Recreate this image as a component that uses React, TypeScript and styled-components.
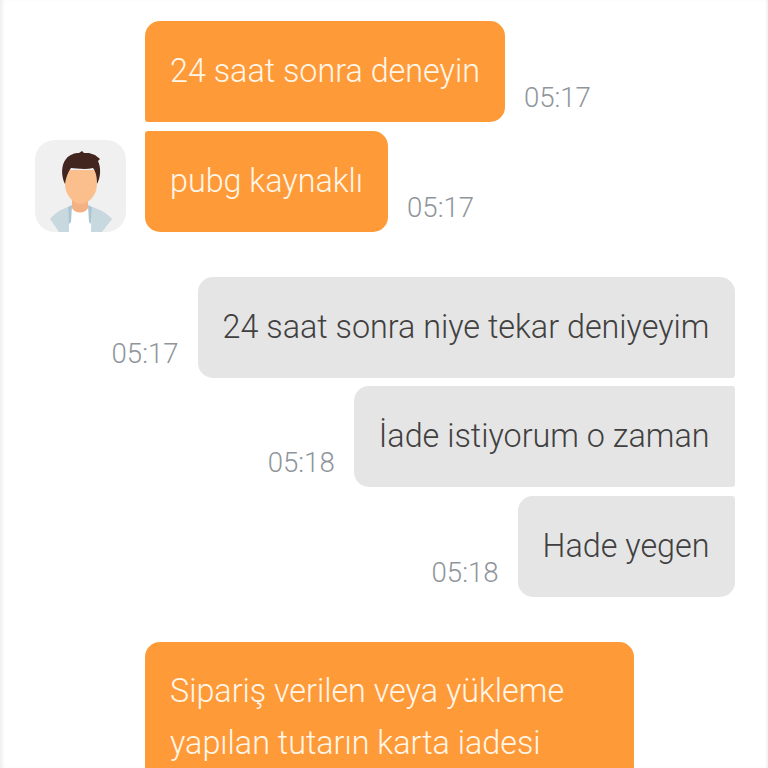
import React from 'react'
import styled, { createGlobalStyle } from 'styled-components'

const GlobalStyle = createGlobalStyle`
  html, body {
    margin: 0;
    padding: 0;
    background: #ffffff;
    height: 768px;
    overflow: hidden;
  }
`

const Avatar = () => (
  <AvatarBox>
    <svg width="91" height="92" viewBox="0 0 91 92">
      {/* jacket */}
      <path d="M15 79 C20 73 27 69 33 67 L35 92 L24 92 Z" fill="#c8d8df" />
      <path d="M77 79 C72 73 64 69 57 67 L56 92 L67 92 Z" fill="#c8d8df" />
      {/* shirt */}
      <path d="M34 69 L56 69 L56 92 L34 92 Z" fill="#ffffff" />
      {/* lapels */}
      <path d="M33 67 L37 65 L36 82 L34 84 Z" fill="#a9c4d2" />
      <path d="M57 67 L53 65 L54 82 L56 84 Z" fill="#a9c4d2" />
      {/* neck */}
      <path d="M37 54 L53 54 L53 68 C50 74 40 74 37 68 Z" fill="#f4b183" />
      {/* face */}
      <path d="M30 30 L62 30 L62 44 C62 56 53 64 46 64 C39 64 30 56 30 44 Z" fill="#fbbf8e" />
      {/* hair */}
      <path d="M30 44 C26 36 26 25 31 19 C35 14 40 13 44 13 L47 11 L49 13 L54 13 L60 15 L65 19 L63 21 C66 27 66 37 62 44 C62 37 61 32 58 28 C50 30 40 28 36 28 C33 32 31 37 30 44 Z" fill="#41251e" />
    </svg>
  </AvatarBox>
)

export default function App() {
  return (
    <Screen>
      <GlobalStyle />
      <Incoming>
        <Avatar />
        <Stack>
          <Row>
            <Bubble $orange $bl={3}>24 saat sonra deneyin</Bubble>
            <Time>05:17</Time>
          </Row>
          <Row>
            <Bubble $orange $tl={3}>pubg kaynaklı</Bubble>
            <Time>05:17</Time>
          </Row>
        </Stack>
      </Incoming>

      <Outgoing>
        <Row>
          <Time>05:17</Time>
          <Bubble $br={3}>24 saat sonra niye tekar deniyeyim</Bubble>
        </Row>
        <Row>
          <Time>05:18</Time>
          <Bubble $tr={3} $br={3}>İade istiyorum o zaman</Bubble>
        </Row>
        <Row>
          <Time>05:18</Time>
          <Bubble $tr={3}>Hade yegen</Bubble>
        </Row>
      </Outgoing>

      <LastBubble>
        Sipariş verilen veya yükleme
        <br />
        yapılan tutarın karta iadesi
      </LastBubble>
    </Screen>
  )
}

const Screen = styled.div`
  box-sizing: border-box;
  width: 768px;
  height: 768px;
  overflow: hidden;
  padding: 21px 33.5px 0 35px;
  background: #ffffff;
  box-shadow: inset 4px 0 4px -2px #ececec, inset -3px 0 3px -2px #ececec;
  font-family: Roboto, "Liberation Sans", sans-serif;
`

const Incoming = styled.section`
  display: flex;
  align-items: flex-end;
  gap: 19px;
`

const AvatarBox = styled.div`
  width: 91px;
  height: 92px;
  flex: none;
  border-radius: 20px;
  overflow: hidden;
  background: #f0f0f0;

  svg {
    display: block;
  }
`

const Stack = styled.div`
  display: flex;
  flex-direction: column;
  gap: 8.5px;
`

const Row = styled.div`
  display: flex;
  align-items: flex-end;
  gap: 19px;
`

const Outgoing = styled.section`
  display: flex;
  flex-direction: column;
  align-items: flex-end;
  gap: 8.5px;
  margin-top: 45px;
`

const Bubble = styled.div<{ $orange?: boolean; $tl?: number; $tr?: number; $br?: number; $bl?: number }>`
  box-sizing: border-box;
  height: 101px;
  padding: 30px 25px;
  border-radius: ${p => `${p.$tl ?? 15}px ${p.$tr ?? 15}px ${p.$br ?? 15}px ${p.$bl ?? 15}px`};
  background: ${p => (p.$orange ? '#ff9a38' : '#e5e5e5')};
  color: ${p => (p.$orange ? '#fff6ea' : '#404040')};
  font-size: 32.3px;
  font-weight: 300;
  line-height: 41px;
  white-space: nowrap;
`

const LastBubble = styled.div`
  box-sizing: border-box;
  width: 489px;
  height: 180px;
  margin: 45px 0 0 110px;
  padding: 23px 25px;
  border-radius: 15px;
  background: #ff9a38;
  color: #fff6ea;
  font-size: 32.3px;
  font-weight: 300;
  line-height: 52px;
  white-space: nowrap;
`

const Time = styled.span`
  color: #8f959b;
  font-size: 27.6px;
  font-weight: 300;
  line-height: 33px;
  margin-bottom: 8px;
`
